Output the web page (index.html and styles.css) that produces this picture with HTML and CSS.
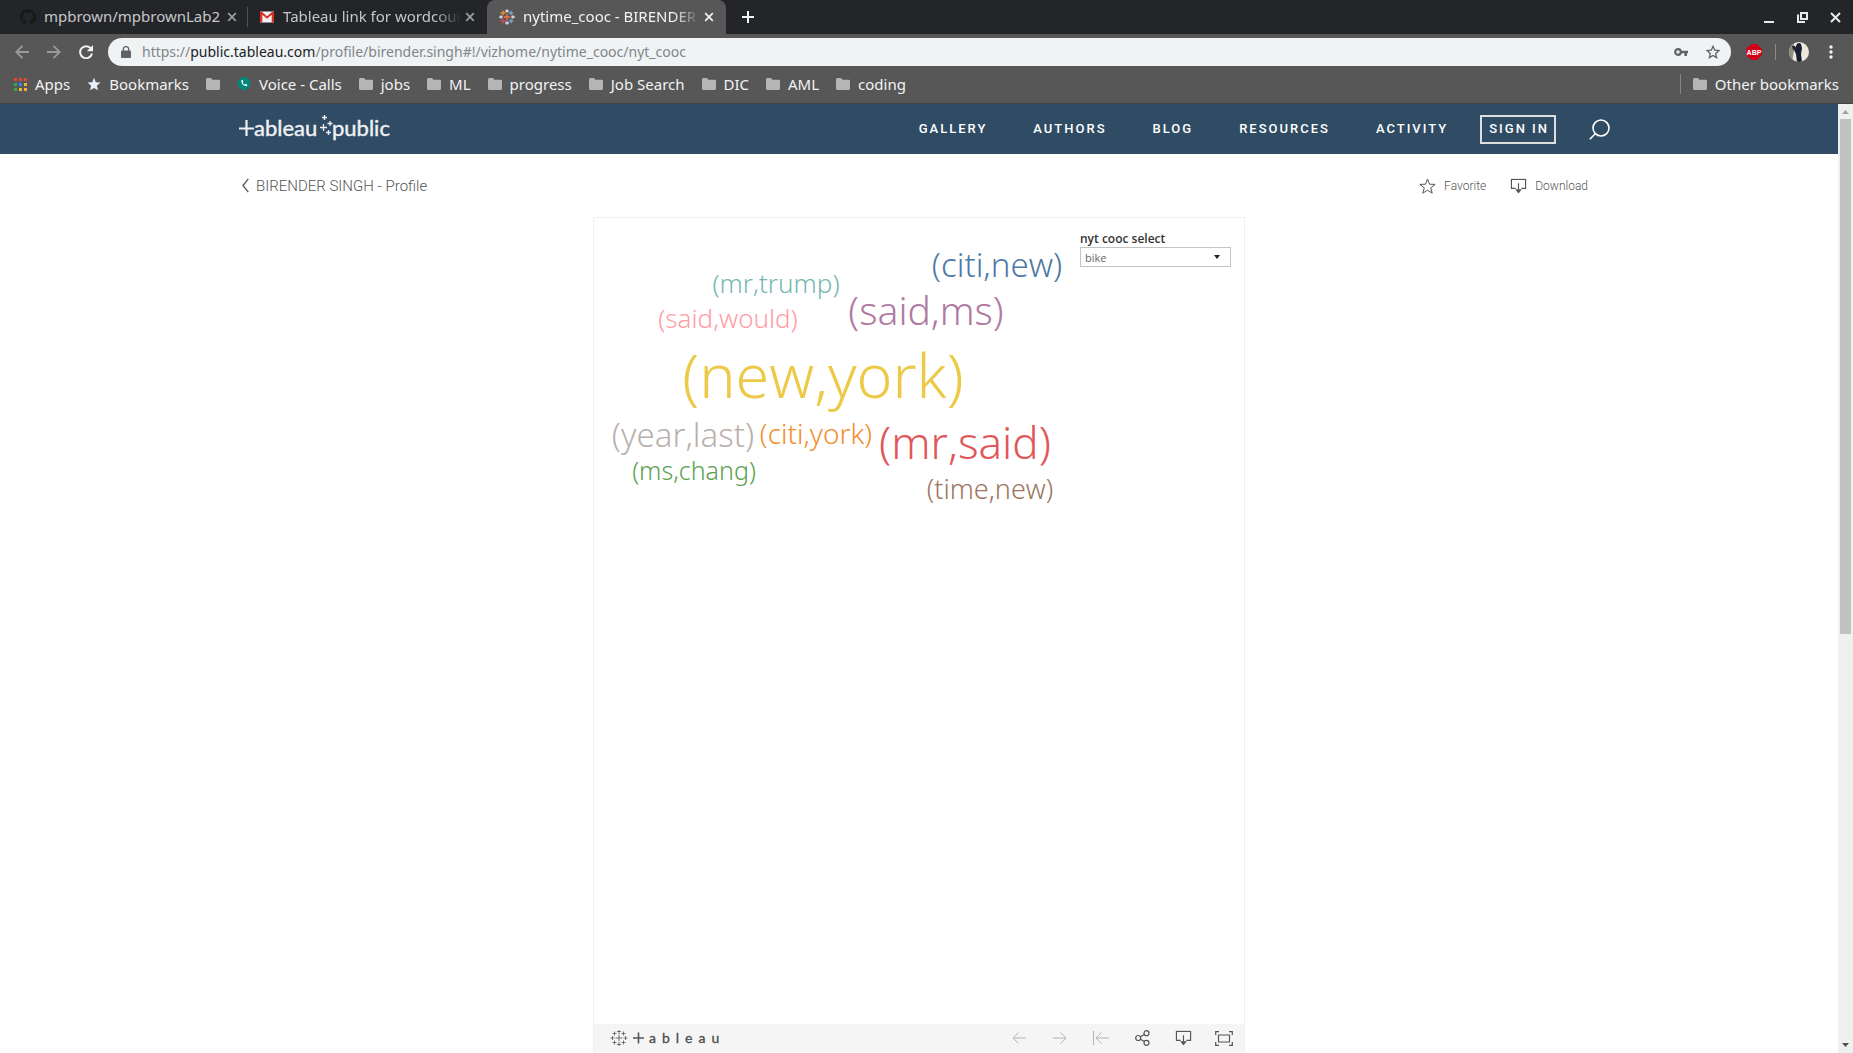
FILE: index.html
```html
<!DOCTYPE html>
<html lang="en">
<head>
<meta charset="utf-8">
<title>nytime_cooc - BIRENDER SINGH | Tableau Public</title>
<link rel="stylesheet" href="styles.css">
</head>
<body>
<svg class="sprite" aria-hidden="true">
  <symbol id="close" viewBox="0 0 10 10"><path d="M1.200 1.200l7.600 7.600M8.800 1.200l-7.600 7.600" fill="none" stroke="currentColor" stroke-width="1.700"/></symbol>
  <symbol id="folder" viewBox="0 0 14 12"><path d="M1.500 0H5l1.500 1.700h6Q14 1.700 14 3v7.500Q14 12 12.500 12h-11Q0 12 0 10.500v-9Q0 0 1.500 0z" fill="#b4b5b7"/></symbol>
  <symbol id="download" viewBox="0 0 18 16"><path d="M6 10.500H1.500V1h15v9.500H12M9 5v7" fill="none" stroke="currentColor" stroke-width="1.200"/><path d="M5.500 11.500h7L9 16z" fill="currentColor"/></symbol>
</svg>

<div class="browser">
  <div class="tabstrip">
    <div class="tab">
      <svg class="favicon" viewBox="0 0 16 16"><path fill="#17191c" d="M8 0C3.580 0 0 3.580 0 8c0 3.540 2.290 6.530 5.470 7.590.4.070.55-.17.55-.38v-1.490c-2.010.37-2.530-.49-2.690-.94-.09-.23-.48-.94-.82-1.130-.28-.15-.68-.52-.01-.53.63-.01 1.080.58 1.230.82.72 1.210 1.870.87 2.330.66.07-.52.28-.87.51-1.070-1.780-.2-3.640-.89-3.640-3.950 0-.87.31-1.590.82-2.150-.08-.2-.36-1.020.08-2.120 0 0 .67-.21 2.200.82a7.400 7.400 0 0 1 4 0c1.530-1.040 2.200-.82 2.200-.82.44 1.100.16 1.920.08 2.120.51.56.82 1.270.82 2.150 0 3.070-1.870 3.750-3.650 3.950.29.25.54.73.54 1.480v2.200c0 .21.15.46.55.38A8 8 0 0 0 8 0z"/></svg>
      <span class="tab-title">mpbrown/mpbrownLab2</span>
      <button class="tab-close" aria-label="Close tab"><svg width="10" height="10"><use href="#close"/></svg></button>
    </div>
    <div class="tab tab-divided">
      <svg class="favicon" viewBox="0 0 16 16"><path fill="#f2f2f2" d="M1 2.500h14v11H1z"/><path fill="#d93025" d="M1 13.500v-11h1.500L8 7.300l5.500-4.800H15v11h-2.300V5.800L8 9.800 3.300 5.800v7.700z"/></svg>
      <span class="tab-title tab-fade">Tableau link for wordcount</span>
      <button class="tab-close" aria-label="Close tab"><svg width="10" height="10"><use href="#close"/></svg></button>
    </div>
    <div class="tab tab-active">
      <svg class="favicon" viewBox="0 0 16 16" fill="none" stroke-width="1.300"><path stroke="#f28e2b" d="M4 1.500v5M1.500 4h5"/><path stroke="#ff7043" d="M8 5v6M5 8h6"/><path stroke="#d7dbe6" d="M8 .2v3.600M6.200 2h3.600M8 12.200v3.600M6.200 14h3.600M2 6.200v3.600M.2 8h3.600M14 6.200v3.600M12.200 8h3.600"/><path stroke="#7fa3cc" d="M12 1.800v4.400M9.800 4h4.400M12 9.800v4.400M9.800 12h4.400"/><path stroke="#d9455a" d="M4 9.500v5M1.500 12h5"/></svg>
      <span class="tab-title tab-fade">nytime_cooc - BIRENDER SINGH</span>
      <button class="tab-close" aria-label="Close tab"><svg width="10" height="10"><use href="#close"/></svg></button>
    </div>
    <button class="new-tab" aria-label="New tab"><svg width="12" height="12"><path d="M6 0v12M0 6h12" stroke="#f1f3f4" stroke-width="2"/></svg></button>
    <div class="window-buttons">
      <button aria-label="Minimize"><svg width="11" height="11"><path d="M0 10h10" stroke="#e8eaed" stroke-width="2"/></svg></button>
      <button aria-label="Restore"><svg width="11" height="11" fill="none" stroke="#e8eaed" stroke-width="2"><path d="M4 1h6v6H4z"/><path d="M1 2.500V10h7"/></svg></button>
      <button aria-label="Close"><svg width="11" height="11"><path d="M1 1l9 9M10 1l-9 9" stroke="#e8eaed" stroke-width="2"/></svg></button>
    </div>
  </div>

  <div class="toolbar">
    <div class="nav-buttons">
      <button class="dim" aria-label="Back"><svg width="14" height="14" fill="none" stroke="currentColor" stroke-width="1.800"><path d="M14 7H1.500M7.500.8L1.300 7l6.200 6.200"/></svg></button>
      <button class="dim" aria-label="Forward"><svg width="14" height="14" fill="none" stroke="currentColor" stroke-width="1.800"><path d="M0 7h12.500M6.500.8L12.700 7l-6.200 6.200"/></svg></button>
      <button aria-label="Reload"><svg width="14" height="14"><path d="M11.900 3.500A6 6 0 1 0 13 8.500" fill="none" stroke="currentColor" stroke-width="2"/><path d="M14 0v6.200H7.800z" fill="currentColor"/></svg></button>
    </div>
    <div class="omnibox">
      <svg width="10" height="12"><path d="M1 4.500h8q1 0 1 1V11q0 1-1 1H1q-1 0-1-1V5.500q0-1 1-1z" fill="#5f6368"/><path d="M2.300 5V3a2.700 2.400 0 0 1 5.400 0v2" fill="none" stroke="#5f6368" stroke-width="1.300"/></svg>
      <span class="url">https://<b>public.tableau.com</b>/profile/birender.singh#!/vizhome/nytime_cooc/nyt_cooc</span>
      <svg width="14" height="8"><circle cx="4" cy="4" r="2.800" fill="none" stroke="#5f6368" stroke-width="2.200"/><path d="M7 2.800h7v2.400h-1V8h-2.600V5.200H7z" fill="#5f6368"/></svg>
      <svg width="14" height="14" viewBox="0 0 14 14"><path d="M7 1.300l1.700 3.900 4.200.4-3.200 2.800.9 4.200L7 10.400l-3.600 2.200.9-4.200L1.100 5.600l4.200-.4z" fill="none" stroke="#5f6368" stroke-width="1.300"/></svg>
    </div>
    <div class="extensions">
      <svg class="abp" width="16" height="16"><path d="M5 0h6l5 5v6l-5 5H5l-5-5V5z" fill="#d0021b"/><text x="8" y="11" text-anchor="middle">ABP</text></svg>
      <span class="bar"></span>
      <svg width="20" height="20"><defs><clipPath id="face"><circle cx="10" cy="10" r="10"/></clipPath></defs><g clip-path="url(#face)"><path d="M0 0h20v20H0z" fill="#ece8dc"/><path d="M0 0h5v8L3 20H0z" fill="#8d8e80"/><path d="M8 2q2-2 4 0l1 4-1 6 1 8H8L7 12 5 8z" fill="#17202e"/><path d="M3 4h3l1 3-3 1z" fill="#20262c"/></g></svg>
      <svg width="4" height="14" fill="#f1f3f4"><circle cx="2" cy="2" r="1.700"/><circle cx="2" cy="7" r="1.700"/><circle cx="2" cy="12" r="1.700"/></svg>
    </div>
  </div>

  <nav class="bookmarks" aria-label="Bookmarks">
    <a href="#apps"><svg width="13" height="13"><path d="M0 0h3v3H0zM5 0h3v3H5zM10 0h3v3h-3z" fill="#ea4335"/><path d="M0 5h3v3H0zM0 10h3v3H0z" fill="#34a853"/><path d="M5 5h3v3H5z" fill="#2f8af5"/><path d="M10 5h3v3h-3zM5 10h3v3H5zM10 10h3v3h-3z" fill="#fbb034"/></svg>Apps</a>
    <a href="#b"><svg width="14" height="14"><path d="M7 .8l1.800 4.400 4.700.4-3.600 3.100 1.100 4.600L7 10.900l-4 2.400 1.100-4.600L.5 5.600l4.700-.4z" fill="#e8f0fe"/></svg>Bookmarks</a>
    <a href="#f" aria-label="Folder"><svg width="14" height="12"><use href="#folder"/></svg></a>
    <a href="#v"><svg width="14" height="14"><path d="M7 0a6.300 6.300 0 0 1 1.500 12.400L7 14l-1.500-1.600A6.300 6.300 0 0 1 7 0z" fill="#00897b"/><path d="M4.200 3.300l1.400-.3.900 1.900-.9.900q.6 1.300 1.900 2l.9-1 1.900.9-.3 1.500Q4.500 9.200 4.200 3.300z" fill="#fff"/></svg>Voice - Calls</a>
    <a href="#j"><svg width="14" height="12"><use href="#folder"/></svg>jobs</a>
    <a href="#m"><svg width="14" height="12"><use href="#folder"/></svg>ML</a>
    <a href="#p"><svg width="14" height="12"><use href="#folder"/></svg>progress</a>
    <a href="#s"><svg width="14" height="12"><use href="#folder"/></svg>Job Search</a>
    <a href="#d"><svg width="14" height="12"><use href="#folder"/></svg>DIC</a>
    <a href="#a"><svg width="14" height="12"><use href="#folder"/></svg>AML</a>
    <a href="#c"><svg width="14" height="12"><use href="#folder"/></svg>coding</a>
    <a class="other" href="#o"><svg width="14" height="12"><use href="#folder"/></svg>Other bookmarks</a>
  </nav>
</div>

<div class="viewport">
  <div class="page">
    <header class="site-header">
      <a class="logo" href="#home" aria-label="Tableau Public">
        <svg width="152" height="28" fill="none" stroke="#eef1f4">
          <path d="M7.500 5v16M0 13.500h15" stroke-width="2.200"/>
          <text x="15" y="21">ableau</text>
          <path d="M85.500 0v5M83 2.500h5M84.500 9v7M81 12.500h7M91 6v5M88.500 8.500h5M89.500 15v5M87 17.500h5" stroke-width="1.300"/>
          <text x="93" y="21">public</text>
        </svg>
      </a>
      <nav class="site-nav">
        <a href="#gallery">GALLERY</a>
        <a href="#authors">AUTHORS</a>
        <a href="#blog">BLOG</a>
        <a href="#resources">RESOURCES</a>
        <a href="#activity">ACTIVITY</a>
      </nav>
      <button class="sign-in">SIGN IN</button>
      <button class="search" aria-label="Search"><svg width="21" height="21" fill="none" stroke="#fff" stroke-width="1.600"><circle cx="12" cy="9" r="8"/><path d="M6.500 14.500L.8 20.200"/></svg></button>
    </header>

    <div class="crumbs">
      <a class="back" href="#profile"><svg width="7" height="15"><path d="M6.300.8L1 7.500l5.300 6.700" fill="none" stroke="#555" stroke-width="1.300"/></svg>BIRENDER SINGH - Profile</a>
      <button class="action"><svg width="17" height="16" viewBox="0 0 17 16"><path d="M8.500 1l2 5.200 5.600.2-4.400 3.500 1.500 5.300-4.700-3.100-4.700 3.100 1.500-5.300L.9 6.400l5.600-.2z" fill="none" stroke="#555"/></svg>Favorite</button>
      <button class="action"><svg width="17" height="16" viewBox="0 0 18 16"><use href="#download"/></svg>Download</button>
    </div>

    <main class="viz">
      <div class="dashboard">
        <svg class="cloud" viewBox="0 0 484 300" role="img" aria-label="Word co-occurrence cloud">
          <text x="403" y="59" font-size="33" fill="#4e79a7">(citi,new)</text>
          <text x="182" y="75" font-size="26" fill="#76b7b2">(mr,trump)</text>
          <text x="134" y="110" font-size="26" fill="#ff9da7">(said,would)</text>
          <text x="332" y="107" font-size="39" fill="#b07aa1">(said,ms)</text>
          <text x="229" y="180" font-size="61" fill="#edc948">(new,york)</text>
          <text x="89" y="229" font-size="33" fill="#bab0ac">(year,last)</text>
          <text x="222" y="226" font-size="28" fill="#f28e2b">(citi,york)</text>
          <text x="371" y="241" font-size="44" fill="#e15759">(mr,said)</text>
          <text x="100" y="262" font-size="25" fill="#59a14f">(ms,chang)</text>
          <text x="396" y="281" font-size="27" fill="#9c755f">(time,new)</text>
        </svg>
        <div class="filter">
          <label for="cooc">nyt cooc select</label>
          <div class="select-wrap">
            <select id="cooc"><option>bike</option></select>
            <svg width="6" height="4"><path d="M0 0h6L3 4z" fill="#222"/></svg>
          </div>
        </div>
      </div>
      <footer class="viz-bar">
        <a class="viz-logo" href="#tableau" aria-label="tableau">
          <svg width="130" height="18" fill="none" stroke="#555">
            <path d="M9 5.500v7M5.500 9h7M9 1v4M7 2.500h4M9 13v4M7 15.500h4M2.500 7v4M.5 9h4M15.500 7v4M13.500 9h4M4.500 2.500v4M2.500 4.500h4M13.500 2.500v4M11.500 4.500h4M4.500 11.500v4M2.500 13.500h4M13.500 11.500v4M11.500 13.500h4" stroke-width=".8"/>
            <path d="M28.500 3.500v11M23 9h11" stroke-width="1.600"/>
            <text x="39" y="14">ableau</text>
          </svg>
        </a>
        <button class="faint" aria-label="Undo"><svg width="14" height="12" fill="none" stroke="currentColor"><path d="M14 6H1M6.500.5L1 6l5.500 5.500"/></svg></button>
        <button class="faint" aria-label="Redo"><svg width="14" height="12" fill="none" stroke="currentColor"><path d="M0 6h13M7.500.5L13 6l-5.500 5.500"/></svg></button>
        <button class="faint" aria-label="Reset"><svg width="16" height="14" fill="none" stroke="currentColor"><path d="M.5 0v14M16 7H3M8.500 1.500L3 7l5.500 5.500"/></svg></button>
        <button aria-label="Share"><svg width="15" height="16" fill="none" stroke="currentColor" stroke-width="1.200"><circle cx="3.200" cy="8" r="2.500"/><circle cx="11.500" cy="3.200" r="2.500"/><circle cx="11.500" cy="12.800" r="2.500"/><path d="M5.400 6.800l4-2.300M5.400 9.200l4 2.300"/></svg></button>
        <button aria-label="Download"><svg width="17" height="16" viewBox="0 0 18 16"><use href="#download"/></svg></button>
        <button aria-label="Full screen"><svg width="18" height="15" fill="none" stroke="currentColor" stroke-width="1.200"><path d="M3.500 4h11v7h-11zM.7 4V.7H4M14 .7h3.300V4M17.300 11v3.300H14M4 14.300H.7V11"/></svg></button>
      </footer>
    </main>
  </div>
  <div class="scrollbar" aria-hidden="true">
    <svg width="7" height="4"><path d="M0 4l3.500-4L7 4z" fill="#a3a3a3"/></svg>
    <div class="track"><div class="thumb"></div></div>
    <svg width="7" height="4"><path d="M0 0h7L3.500 4z" fill="#505050"/></svg>
  </div>
</div>
</body>
</html>
```
FILE: styles.css
```css
* { box-sizing: border-box; }
body {
  margin: 0;
  min-height: 100vh;
  display: flex;
  flex-direction: column;
  background: #fff;
  font-family: "Liberation Sans", sans-serif;
}
button {
  padding: 0;
  border: 0;
  background: none;
  color: inherit;
  font: inherit;
  display: flex;
  align-items: center;
}
a { color: inherit; text-decoration: none; }
svg { flex: none; display: block; }
.sprite { position: absolute; width: 0; height: 0; }

/* Browser window */
.browser {
  background: #575757;
  border-bottom: 1px solid #454545;
  color: #f1f3f4;
  font: 15px/20px "Noto Sans", sans-serif;
}
.tabstrip {
  display: flex;
  height: 34px;
  background: #242529;
}
.tab {
  width: 240px;
  padding: 0 12px;
  display: flex;
  align-items: center;
  color: #c4c7cb;
}
.tab:first-child { width: 247px; padding-left: 20px; padding-right: 10px; }
.tab-divided { background: linear-gradient(#505256, #505256) left center / 1px 20px no-repeat; }
.tab-active {
  width: 239px;
  background: #575757;
  border-radius: 8px 8px 0 0;
  color: #f1f3f4;
}
.favicon { width: 16px; height: 16px; margin-right: 8px; }
.tab-title { flex: 1; overflow: hidden; white-space: nowrap; padding-bottom: 2px; }
.tab-fade { margin-right: 4px; mask-image: linear-gradient(to right, #000 85%, transparent); }
.tab-close { color: #9a9da1; }
.tab-active .tab-close { color: #f1f3f4; }
.new-tab { margin-left: 16px; }
.window-buttons {
  margin-left: auto;
  padding-right: 12px;
  display: flex;
  gap: 22px;
}
.toolbar {
  display: flex;
  align-items: center;
  gap: 15px;
  padding: 4px 14px 4px 15px;
}
.nav-buttons { display: flex; gap: 18px; }
.nav-buttons .dim { color: #9a9a9a; }
.omnibox {
  flex: 1;
  height: 28px;
  padding: 0 11px 0 13px;
  border-radius: 14px;
  background: #eff3f4;
  display: flex;
  align-items: center;
  gap: 18px;
}
.url { flex: 1; margin-left: -7px; font-size: 14px; color: #80868b; }
.url b { font-weight: 400; color: #202124; }
.extensions { display: flex; align-items: center; gap: 13px; }
.extensions > :last-child { margin: 0 6px 0 7px; }
.extensions .bar { width: 1px; height: 16px; background: #8a8a8a; }
.abp text { font: 700 7px "Liberation Sans", sans-serif; fill: #fff; }
.bookmarks {
  display: flex;
  align-items: center;
  gap: 17px;
  height: 33px;
  padding: 0 14px 5px;
}
.bookmarks a { display: flex; align-items: center; gap: 8px; white-space: nowrap; }
.bookmarks .other {
  margin-left: auto;
  padding-left: 12px;
  border-left: 1px solid #868686;
}

/* Page */
.viewport { flex: 1; display: flex; }
.page { flex: 1; display: flex; flex-direction: column; }
.site-header {
  display: flex;
  align-items: center;
  height: 50px;
  padding: 0 228px 0 239px;
  background: #304c64;
  color: #fff;
  font: 500 13px/16px Roboto, sans-serif;
  letter-spacing: 2px;
}
.logo text { font: 400 22px Lato, sans-serif; letter-spacing: 0; fill: #eef1f4; stroke-width: .4px; }
.site-nav { margin-left: auto; display: flex; gap: 46px; }
.sign-in {
  margin: 0 33px 0 32px;
  height: 29px;
  padding: 0 5px 0 7px;
  border: 2px solid #dedede;
  letter-spacing: 2px;
}
.crumbs {
  display: flex;
  align-items: center;
  height: 63px;
  padding: 0 250px 0 242px;
  color: #555;
  font: 300 12px/16px Roboto, sans-serif;
}
.back { margin-right: auto; display: flex; align-items: center; gap: 7px; font-size: 15px; }
.action { gap: 8px; }
.action + .action { margin-left: 24px; }

.viz {
  flex: 1;
  align-self: center;
  width: 652px;
  margin-bottom: 1px;
  border: 1px solid #f0f0f0;
  border-bottom: 0;
  display: flex;
  flex-direction: column;
}
.dashboard { flex: 1; display: flex; }
.cloud {
  width: 484px;
  height: 300px;
  font-family: "Noto Sans", sans-serif;
  font-weight: 300;
  font-kerning: none;
  text-anchor: middle;
}
.filter { flex: 1; padding: 13px 13px 0 2px; color: #333; font: 600 12px/16px "Open Sans", sans-serif; }
.filter label { display: block; }
.select-wrap { display: grid; align-items: center; }
.select-wrap > * { grid-area: 1 / 1; }
.select-wrap svg { justify-self: end; margin-right: 11px; pointer-events: none; }
select {
  appearance: none;
  width: 100%;
  height: 20px;
  padding: 0 4px;
  border: 1px solid #c4c4c4;
  border-radius: 0;
  background: #fff;
  color: #666;
  font: 400 11px "Open Sans", sans-serif;
}
.viz-bar {
  height: 28px;
  padding: 0 11px 0 16px;
  display: flex;
  align-items: center;
  gap: 23px;
  background: #f5f5f5;
  color: #555;
}
.viz-bar button { width: 18px; justify-content: center; }
.viz-logo { margin-right: auto; }
.viz-logo text { font: 400 14px Lato, sans-serif; letter-spacing: 6px; fill: #444; stroke-width: .3px; }
.viz-bar .faint { color: #b4b4b4; }

.scrollbar {
  width: 15px;
  padding: 6px 2px;
  background: #eff1f0;
  display: flex;
  flex-direction: column;
  align-items: center;
  gap: 5px;
}
.track { flex: 1; width: 11px; }
.thumb { height: 56%; background: #c0c2c1; }
```
